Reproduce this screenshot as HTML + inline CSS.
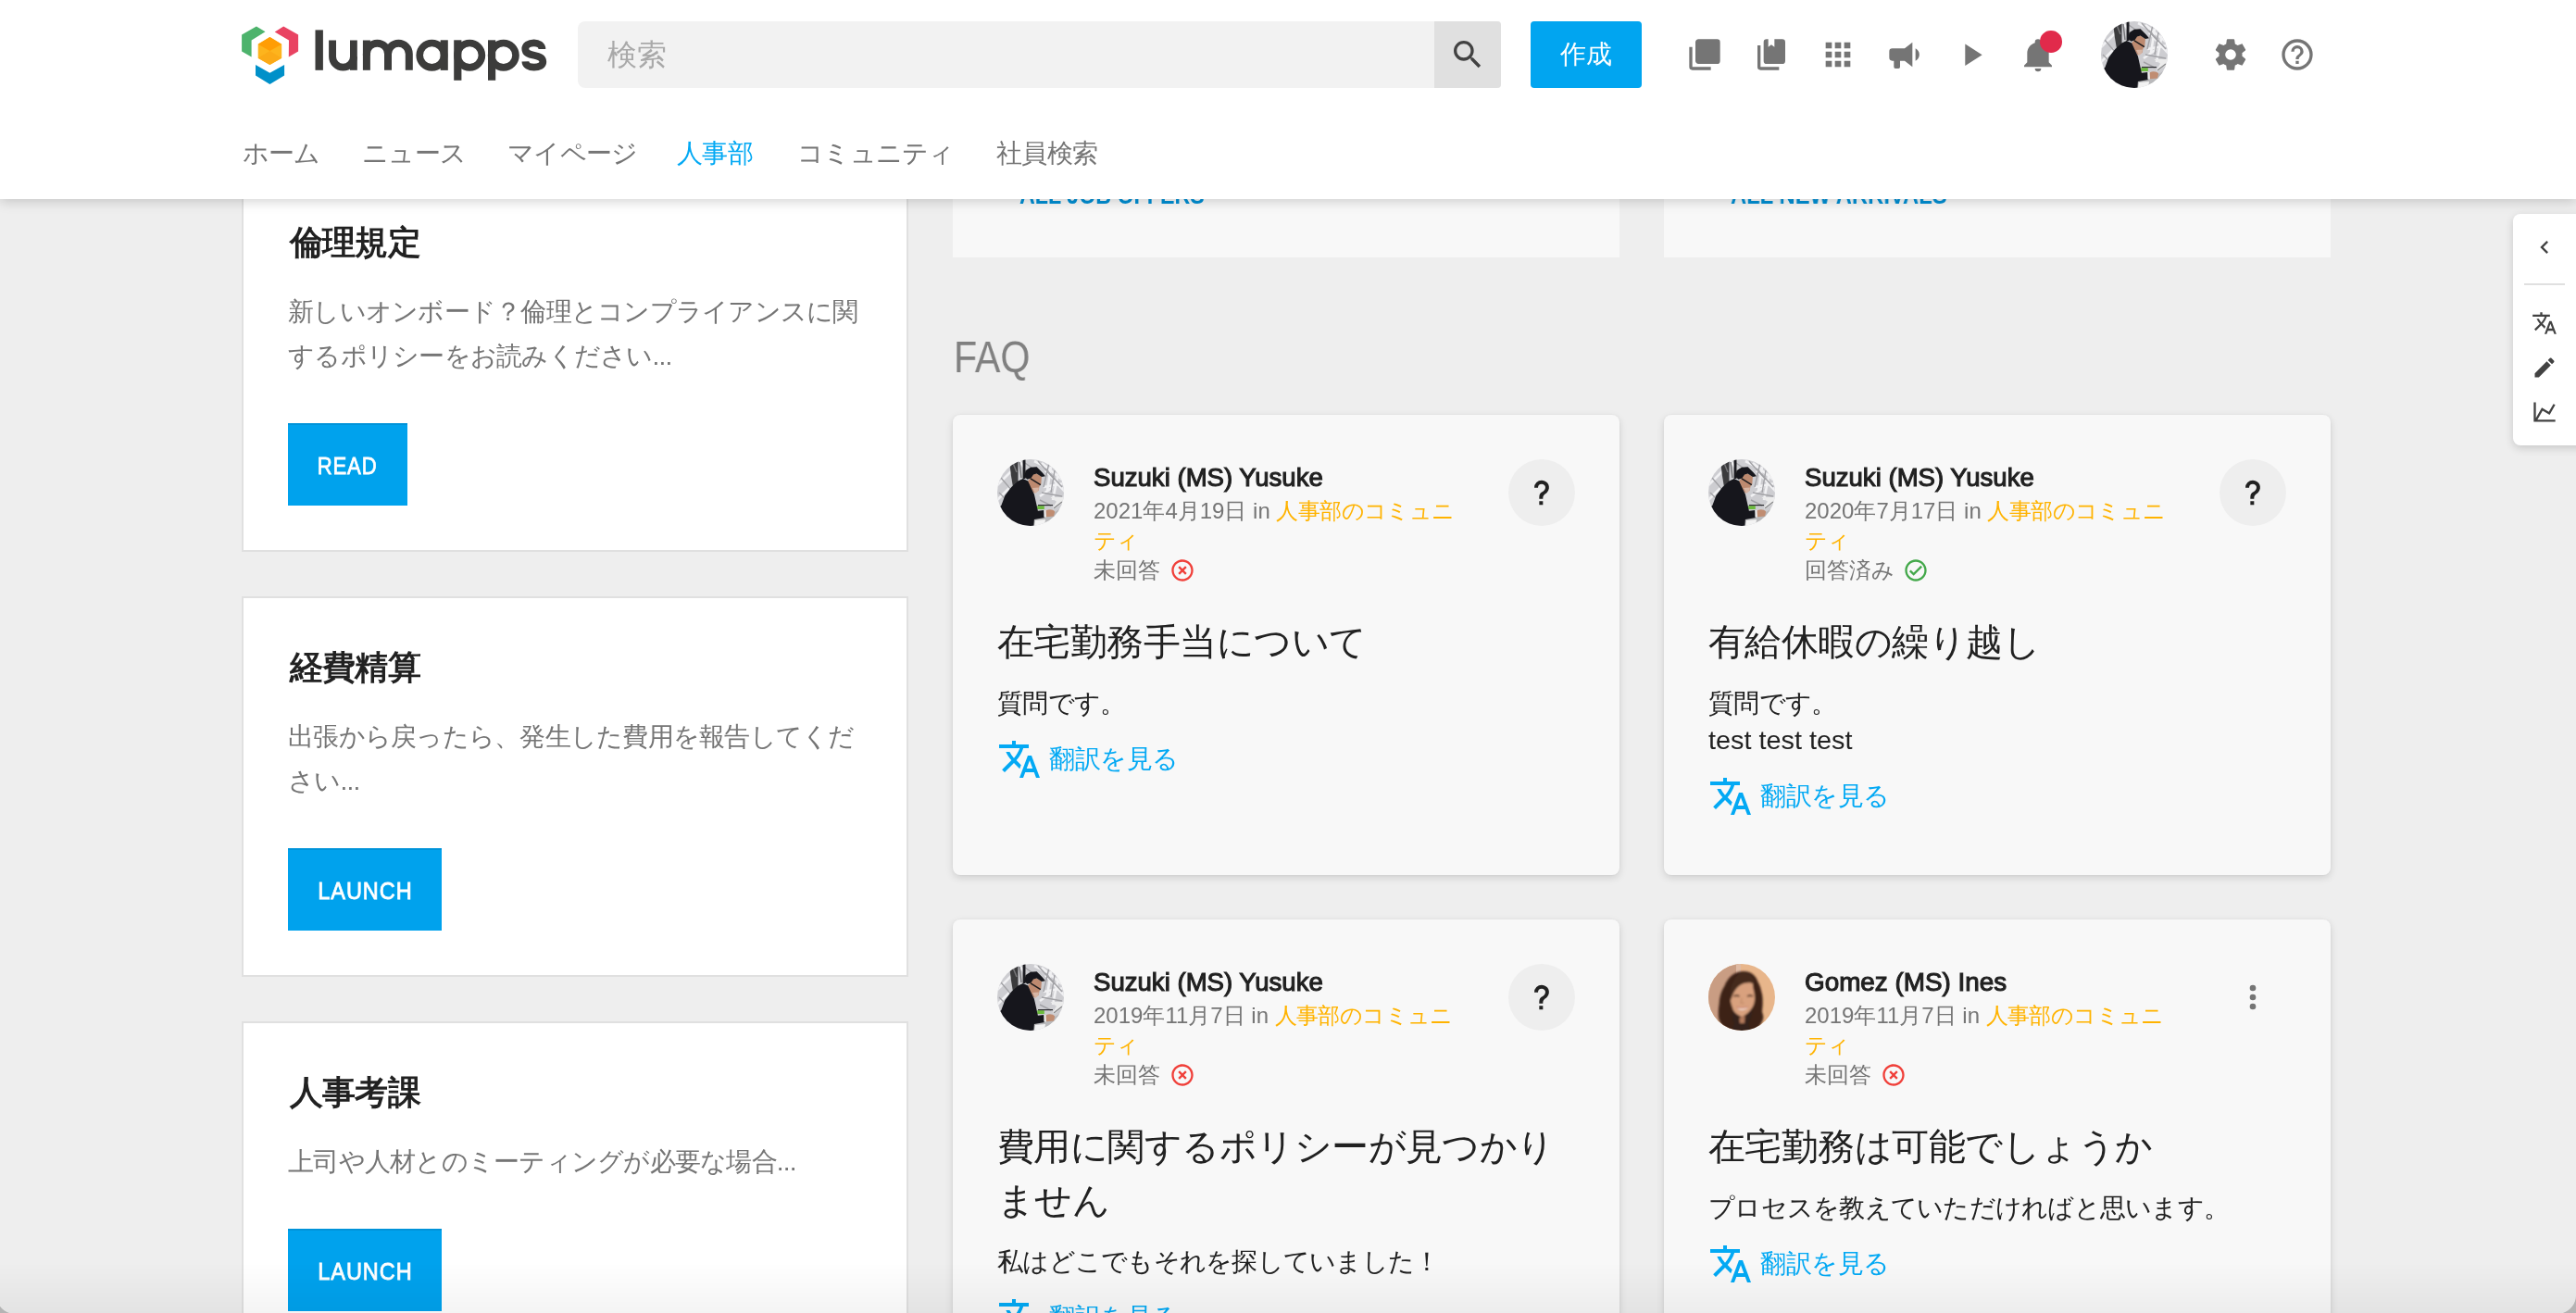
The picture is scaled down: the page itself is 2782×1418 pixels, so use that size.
<!DOCTYPE html>
<html lang="ja">
<head>
<meta charset="utf-8">
<title>LumApps - 人事部</title>
<style>
*{box-sizing:border-box;margin:0;padding:0}
html,body{width:2782px;height:1418px;overflow:hidden;background:#eeeeee}
body{font-family:"Liberation Sans",sans-serif;color:#212121;position:relative}
.abs{position:absolute}
svg{display:block}
#content,#header,#tb{will-change:transform}
.sx{display:inline-block;white-space:nowrap;letter-spacing:0}

/* ---------- header ---------- */
#header{position:absolute;left:0;top:0;width:2782px;height:215px;background:#fff;z-index:20;box-shadow:0 3px 12px rgba(0,0,0,.17)}
#logo{position:absolute;left:255px;top:20px;width:345px;height:80px}
#search{position:absolute;left:624px;top:23px;width:997px;height:72px;background:#f2f2f2;border-radius:8px 4px 4px 8px}
#search .ph{position:absolute;left:32px;top:0;line-height:72px;font-size:32px;color:#a9a9a9;white-space:nowrap}
#search .btn{position:absolute;right:0;top:0;width:72px;height:72px;background:#e0e0e0;border-radius:0 4px 4px 0}
#search .btn svg{position:absolute;left:16px;top:16px}
#create{position:absolute;left:1653px;top:23px;width:120px;height:72px;background:#01a5f0;border-radius:4px;color:#fff;font-size:28px;line-height:72px;text-align:center;white-space:nowrap}
.hic{position:absolute;top:39px;width:40px;height:40px}
#badge{position:absolute;left:2203.2px;top:33px;width:23.6px;height:23.6px;border-radius:50%;background:#e12a4b}
#uava{position:absolute;left:2269px;top:23px;width:72px;height:72px}
.nav{position:absolute;top:146px;height:40px;line-height:40px;font-size:28px;color:#757575;white-space:nowrap;letter-spacing:-.75px}
.nav.on{color:#03a9f4}

/* ---------- left cards ---------- */
.lc{position:absolute;left:261px;width:720px;height:411px;background:#fff;border:2px solid #e0e0e0}
.lc h3{position:absolute;left:50px;top:48px;font-size:36px;line-height:54px;font-weight:bold;color:#212121;white-space:nowrap;letter-spacing:-.8px}
.lc p{position:absolute;left:48px;top:126px;font-size:28px;line-height:48px;color:#757575;white-space:nowrap;letter-spacing:-.75px}
.lc .b{position:absolute;left:48px;height:89px;background:#00a2ed;color:#fff;font-size:26px;font-weight:normal;-webkit-text-stroke:.8px #fff;line-height:89px;text-align:center;border-top:2px solid #0093d9}
.lc .b .sx{transform-origin:50% 50%}

/* ---------- right column ---------- */
.tc{position:absolute;top:150px;width:720px;height:128px;background:#f8f8f8}
.tc span{position:absolute;left:72px;top:46px;font-size:28px;line-height:30px;font-weight:bold;color:#0290d5;white-space:nowrap;transform-origin:0 50%}
#faq{position:absolute;left:1029.5px;top:354.5px;font-size:49px;line-height:60px;color:#808080;white-space:nowrap;transform-origin:0 50%}
.fc{position:absolute;width:720px;background:#f8f8f8;border-radius:8px;box-shadow:0 3px 8px rgba(0,0,0,.13),0 0 3px rgba(0,0,0,.06)}
.fc .av{position:absolute;left:48px;top:48px;width:72px;height:72px}
.fc .nm{position:absolute;left:152px;top:48px;font-size:28px;line-height:40px;font-weight:normal;-webkit-text-stroke:1.1px #212121;color:#212121;white-space:nowrap}
.fc .nm .sx{transform-origin:0 50%}
.fc .mt{position:absolute;left:152px;top:88px;font-size:24px;line-height:32px;color:#757575;white-space:nowrap}
.fc .mt b{font-weight:normal;color:#ffb300;letter-spacing:-.6px}
.fc .mt svg{position:absolute}
.fc .hb{position:absolute;left:600px;top:48px;width:72px;height:72px;border-radius:50%;background:#eeeeee}
.fc .hb svg{position:absolute;left:20px;top:20px}
.fc .dv{position:absolute;left:616px;top:64px}
.fc h4{position:absolute;left:48px;top:216px;font-size:40px;line-height:58px;font-weight:normal;color:#212121;white-space:nowrap;letter-spacing:-.55px}
.fc .bd{position:absolute;left:48px;font-size:28px;line-height:40px;color:#212121;white-space:nowrap;letter-spacing:-.75px}
.fc .tr{position:absolute;left:48px;height:48px;line-height:48px;font-size:28px;color:#03a9f4;white-space:nowrap;padding-left:56px;letter-spacing:-.4px}
.fc .tr svg{position:absolute;left:0;top:0;fill:#03a9f4}

/* ---------- right toolbar ---------- */
#tb{position:absolute;left:2714px;top:231px;width:80px;height:250px;background:#fff;border-radius:8px 0 0 8px;box-shadow:0 3px 10px rgba(0,0,0,.16)}
#tb svg{position:absolute;left:20px}
#tb i{position:absolute;left:12px;top:75px;width:44px;height:2px;background:#e0e0e0}

#botfade{position:absolute;left:0;top:1364px;width:2782px;height:54px;background:linear-gradient(to bottom,rgba(0,0,0,0),rgba(0,0,0,.045));z-index:30}
.corner{position:absolute;top:1398px;width:20px;height:20px;z-index:31}
</style>
</head>
<body>
<svg width="0" height="0" style="position:absolute">
  <defs>
    <path id="itr" d="M12.87,15.07L10.33,12.56L10.36,12.53C12.1,10.59 13.34,8.36 14.07,6H17V4H10V2H8V4H1V6H12.17C11.5,7.92 10.44,9.75 9,11.35C8.07,10.32 7.3,9.19 6.69,8H4.69C5.42,9.63 6.42,11.17 7.67,12.56L2.58,17.58L4,19L9,14L12.11,17.11L12.87,15.07M18.5,10H16.5L12,22H14L15.12,19H19.87L21,22H23L18.5,10M15.88,17L17.5,12.67L19.12,17H15.88Z"/>
    <path id="ixc" fill="#f0403a" d="M12,20C7.59,20 4,16.41 4,12C4,7.59 7.59,4 12,4C16.41,4 20,7.59 20,12C20,16.41 16.41,20 12,20M12,2C6.47,2 2,6.47 2,12C2,17.53 6.47,22 12,22C17.53,22 22,17.53 22,12C22,6.47 17.53,2 12,2M14.59,8L12,10.59L9.41,8L8,9.41L10.59,12L8,14.59L9.41,16L12,13.41L14.59,16L16,14.59L13.41,12L16,9.41L14.59,8Z"/>
    <path id="ick" fill="#43a84a" d="M12 2C6.5 2 2 6.5 2 12S6.5 22 12 22 22 17.5 22 12 17.5 2 12 2M12 20C7.59 20 4 16.41 4 12S7.59 4 12 4 20 7.59 20 12 16.41 20 12 20M16.59 7.58L10 14.17L7.41 11.59L6 13L10 17L18 9L16.59 7.58Z"/>
    <path id="iq" fill="#212121" d="M10,19H13V22H10V19M12,2C17.35,2.22 19.68,7.62 16.5,11.67C15.67,12.67 14.33,13.33 13.67,14.17C13,15 13,16 13,17H10C10,15.33 10,13.92 10.67,12.92C11.33,11.92 12.67,11.33 13.5,10.67C15.92,8.43 15.32,5.26 12,5A3,3 0 0,0 9,8H6A6,6 0 0,1 12,2Z"/>
    <clipPath id="cc"><circle cx="36" cy="36" r="36"/></clipPath>
    <filter id="bl" x="-10%" y="-10%" width="120%" height="120%"><feGaussianBlur stdDeviation="0.7"/></filter>
    <filter id="bl2" x="-10%" y="-10%" width="120%" height="120%"><feGaussianBlur stdDeviation="1.3"/></filter>
    <g id="man" clip-path="url(#cc)">
      <rect width="72" height="72" fill="#cdcdd1"/>
      <g filter="url(#bl)">
        <path d="M-2 30L20 8M0 44L14 30M48 4L70 22M52 12L74 36M50 30L72 26M46 40L60 30M58 8L54 34M66 14L60 44M40 2L56 10M24 2L30 10" stroke="#f1f1f3" stroke-width="2.6" fill="none"/>
        <path d="M30 4L50 18M44 2L62 22M52 10L70 30M4 20L16 34M56 4L50 30M62 12L58 36M48 36L70 40M2 36L12 46M46 44L58 50" stroke="#a2a2a6" stroke-width="1.4" fill="none"/>
        <path d="M13.5 6L16 3L22.5 2L22.5 27L17 30L15 18Z" fill="#3b3b3d"/>
        <rect x="27.6" y="-1" width="2.9" height="22" fill="#1e1e20"/>
        <path d="M17 4L21 14M24 3L26 20" stroke="#77777a" stroke-width="1.5"/>
        <path d="M40 64L52 62L64 56L70 52L72 72H38Z" fill="#b9b9bb"/>
        <path d="M41 66L52 65L51 72H40Z" fill="#f3f3f3"/>
        <polygon points="57.3,41 72,41 70,47.5 61.3,53.9 59.8,52.4 64,45.7" fill="#ececec"/>
        <path d="M61 53L70 46" stroke="#8a8a8c" stroke-width="1.4"/>
        <rect x="43.2" y="50.2" width="7.6" height="3.8" fill="#6cbc3e"/>
        <path d="M44 49.6H60" stroke="#2b2b2d" stroke-width="1.2"/>
        <polygon points="35.9,20.2 38.5,16.2 42.6,15.5 47.9,18.9 47.3,26.9 45.4,29.6 44.8,33.8 39.9,36.6 36.6,32.3 33,23.6" fill="#bd8a70"/>
        <path d="M38 31L41 37L44.6 34L44.9 30.5Z" fill="#d6b5a4"/>
        <polygon points="30.5,12.2 35.9,8.8 42.6,8.2 48.6,14.2 52,18.3 47.9,19 42.6,15.5 39,16.4 36.4,20.6 32.5,21.8 29.3,18.9" fill="#15161a"/>
        <path d="M36 20.9L46.8 27.7" stroke="#1b1b1d" stroke-width="1.5"/>
        <path d="M22.5,23.6L27.8,20.9L33.2,23.6L37.2,32.3L39.9,37.7L42.6,49.7L43.9,55.8L50.6,55.1L51.3,63.1L39.9,65.1L39.2,74L-2,74L-2,56L4.4,49.7L8.4,39L15.1,30.3Z" fill="#14161b"/>
        <rect x="50.4" y="55" width="2.4" height="7.6" fill="#eeeeee"/>
        <path d="M52.6 55.2C56 53.6 60 54 62.2 56.4L61 61.4L53 62.2Z" fill="#c08d72"/>
      </g>
    </g>
    <g id="woman" clip-path="url(#cc)">
      <rect width="72" height="72" fill="#e8b68b"/>
      <rect width="32.5" height="72" fill="#c99d83"/>
      <rect x="30" y="0" width="5" height="12" fill="#e0bba4"/>
      <g filter="url(#bl2)">
        <path d="M36.9 8.1C41 7.6 45 9 47.8 10.9C50.5 13 52.5 16 53.5 19.5C55.5 23 56.7 26.5 57.2 29.7C58.3 33 58.7 36.5 58.6 39.8C58.8 44 58.4 48 57.9 51.4C58.8 54 59.5 56.5 59.3 58.6C58.5 62 57 65 55 67.3L50 74H24L13.7 65.1C11.5 61 10.6 57.5 10.9 54.3C10.8 50.5 11 47 11.6 44.1C11.7 40.5 12.2 37 13 34C14 30 15.5 27 17.4 23.9C19 19.5 21.5 16 24.6 13C28 10 32 8.4 36.9 8.1Z" fill="#3c2319"/>
        <path d="M28.9 23.2C33 19.5 42 18.5 47.8 21L48.5 26.8C49.8 31 50.3 35.5 49.9 39.8C49 46 46 52 36.2 57.4C29 54 26.5 50.5 26 47C24.2 43 23.6 39 23.9 35.5C24.5 30.5 26.2 26.5 28.9 23.2Z" fill="#d9a17e"/>
        <path d="M36.9 8.4C44 9 49 14 50.5 22C46 19.5 40 19.8 35 22.5C30 25.5 26.5 31 24.5 39C22.5 33 24 24 28 17C30.5 12.5 33.5 9.5 36.9 8.4Z" fill="#452a1e"/>
        <path d="M27.5 34.9C29.5 33.9 31.5 33.9 33.5 34.9M42 34.9C44 33.9 46 33.9 48 34.9" stroke="#4e2e21" stroke-width="1.7" fill="none"/>
        <path d="M36 37L35.2 42.3L38.6 42.3" stroke="#c18a69" stroke-width="1.2" fill="none"/>
        <path d="M30.4 47C33 48.6 40 48.6 42.8 46.6C41.5 50.6 33 51.2 30.4 47Z" fill="#f2d9cf"/>
        <path d="M30.2 46.6C34 47.6 39 47.4 43 46.2" stroke="#c97f6e" stroke-width="1.1" fill="none"/>
        <path d="M26.5 50C29 55 32.5 57.5 36.2 58.5C41 56.5 45 52.5 47.5 47C48 54 46 60 43 64L46 74H25L27.5 64C25.5 60 25.5 55 26.5 50Z" fill="#34201a"/>
        <path d="M33.5 58.2L36.2 57.4L39.6 56L39 64L33.8 64Z" fill="#b47a5c"/>
      </g>
    </g>
  </defs>
</svg>

<!-- ======= page content ======= -->
<div id="content">
<div class="lc" style="top:185px">
  <h3>倫理規定</h3>
  <p>新しいオンボード？倫理とコンプライアンスに関<br>するポリシーをお読みください...</p>
  <div class="b" style="top:270px;width:129px"><span class="sx" style="letter-spacing:1px;transform:scaleX(.85)">READ</span></div>
</div>
<div class="lc" style="top:644px">
  <h3>経費精算</h3>
  <p>出張から戻ったら、発生した費用を報告してくだ<br>さい...</p>
  <div class="b" style="top:270px;width:166px"><span class="sx" style="letter-spacing:1px;transform:scaleX(.905)">LAUNCH</span></div>
</div>
<div class="lc" style="top:1103px">
  <h3>人事考課</h3>
  <p>上司や人材とのミーティングが必要な場合...</p>
  <div class="b" style="top:222px;width:166px"><span class="sx" style="letter-spacing:1px;transform:scaleX(.905)">LAUNCH</span></div>
</div>

<div class="tc" style="left:1029px"><span style="transform:scaleX(.83)">ALL JOB OFFERS</span></div>
<div class="tc" style="left:1797px"><span style="transform:scaleX(.85)">ALL NEW ARRIVALS</span></div>
<div id="faq" style="transform:scaleX(.84)">FAQ</div>

<div class="fc" style="left:1029px;top:448px;height:497px">
  <svg class="av" viewBox="0 0 72 72"><use href="#man"/></svg>
  <div class="nm"><span class="sx" style="transform:scaleX(.985)">Suzuki (MS) Yusuke</span></div>
  <div class="mt">2021年4月19日 in <b>人事部のコミュニ<br>ティ</b><br>未回答<svg style="left:82px;top:66px" width="28" height="28" viewBox="0 0 24 24"><use href="#ixc"/></svg></div>
  <div class="hb"><svg width="32" height="32" viewBox="0 0 24 24"><use href="#iq"/></svg></div>
  <h4>在宅勤務手当について</h4>
  <div class="bd" style="top:292px">質問です。</div>
  <div class="tr" style="top:348px"><svg width="48" height="48" viewBox="0 0 24 24"><use href="#itr"/></svg>翻訳を見る</div>
</div>

<div class="fc" style="left:1797px;top:448px;height:497px">
  <svg class="av" viewBox="0 0 72 72"><use href="#man"/></svg>
  <div class="nm"><span class="sx" style="transform:scaleX(.985)">Suzuki (MS) Yusuke</span></div>
  <div class="mt">2020年7月17日 in <b>人事部のコミュニ<br>ティ</b><br>回答済み<svg style="left:106px;top:66px" width="28" height="28" viewBox="0 0 24 24"><use href="#ick"/></svg></div>
  <div class="hb"><svg width="32" height="32" viewBox="0 0 24 24"><use href="#iq"/></svg></div>
  <h4>有給休暇の繰り越し</h4>
  <div class="bd" style="top:292px">質問です。<br><span class="sx" style="transform:scaleX(1.03);transform-origin:0 50%">test test test</span></div>
  <div class="tr" style="top:388px"><svg width="48" height="48" viewBox="0 0 24 24"><use href="#itr"/></svg>翻訳を見る</div>
</div>

<div class="fc" style="left:1029px;top:993px;height:560px">
  <svg class="av" viewBox="0 0 72 72"><use href="#man"/></svg>
  <div class="nm"><span class="sx" style="transform:scaleX(.985)">Suzuki (MS) Yusuke</span></div>
  <div class="mt">2019年11月7日 in <b>人事部のコミュニ<br>ティ</b><br>未回答<svg style="left:82px;top:66px" width="28" height="28" viewBox="0 0 24 24"><use href="#ixc"/></svg></div>
  <div class="hb"><svg width="32" height="32" viewBox="0 0 24 24"><use href="#iq"/></svg></div>
  <h4>費用に関するポリシーが見つかり<br>ません</h4>
  <div class="bd" style="top:350px">私はどこでもそれを探していました！</div>
  <div class="tr" style="top:406px"><svg width="48" height="48" viewBox="0 0 24 24"><use href="#itr"/></svg>翻訳を見る</div>
</div>

<div class="fc" style="left:1797px;top:993px;height:560px">
  <svg class="av" viewBox="0 0 72 72"><use href="#woman"/></svg>
  <div class="nm"><span class="sx" style="transform:scaleX(.995)">Gomez (MS) Ines</span></div>
  <div class="mt">2019年11月7日 in <b>人事部のコミュニ<br>ティ</b><br>未回答<svg style="left:82px;top:66px" width="28" height="28" viewBox="0 0 24 24"><use href="#ixc"/></svg></div>
  <svg class="dv" width="40" height="40" viewBox="0 0 24 24"><path fill="#757575" d="M12,16A2,2 0 0,1 14,18A2,2 0 0,1 12,20A2,2 0 0,1 10,18A2,2 0 0,1 12,16M12,10A2,2 0 0,1 14,12A2,2 0 0,1 12,14A2,2 0 0,1 10,12A2,2 0 0,1 12,10M12,4A2,2 0 0,1 14,6A2,2 0 0,1 12,8A2,2 0 0,1 10,6A2,2 0 0,1 12,4Z"/></svg>
  <h4>在宅勤務は可能でしょうか</h4>
  <div class="bd" style="top:292px">プロセスを教えていただければと思います。</div>
  <div class="tr" style="top:348px"><svg width="48" height="48" viewBox="0 0 24 24"><use href="#itr"/></svg>翻訳を見る</div>
</div>

</div>

<!-- ======= header ======= -->
<div id="header">
<svg id="logo" viewBox="255 20 345 80">
  <polygon fill="#4db36c" points="276.9,28.4 286.5,34.3 271.6,43.4 271.6,61.5 261.1,55.4 261.1,37.4"/>
  <polygon fill="#e94362" points="306.2,28.4 322.1,37.6 322.1,55.4 311.8,61.5 312,43.4 296.7,34.4"/>
  <polygon fill="#0090c9" points="276,70 291.4,78.8 307.1,70 307.1,81.6 291.4,91.1 276,81.6"/>
  <polygon fill="#fdb41d" points="291.4,40.1 304.2,47.7 304.2,62.7 291.4,70.1 278.7,62.7 278.7,47.7"/>
  <polygon fill="#ff9d05" points="291.4,40.1 304.2,47.7 291.4,55.1 278.7,47.7"/>
  <polygon fill="#fbaa17" points="291.4,55.1 304.2,62.7 291.4,70.1 278.7,62.7"/>
  <g fill="#3c3c3b">
    <rect x="340.5" y="32.4" width="8.4" height="43.4"/>
    <rect x="378" y="43.5" width="7.8" height="32.3"/>
    <rect x="391.9" y="43.5" width="8" height="32.3"/>
    <rect x="475.7" y="43.3" width="8.1" height="32.6"/>
    <rect x="490.2" y="43.3" width="8.2" height="43.5"/>
    <rect x="527" y="43.3" width="8.2" height="43.5"/>
  </g>
  <g fill="none" stroke="#3c3c3b">
    <path stroke-width="7.9" d="M359.05 43.5V61.2A11.45 11.45 0 0 0 381.95 61.2"/>
    <path stroke-width="8" d="M395.9 60V58.2A11.55 11.55 0 0 1 419 58.2V75.8M419 58.2A11.4 11.4 0 0 1 441.8 58.2V75.8"/>
    <circle stroke-width="7.6" cx="466.4" cy="59.65" r="13.2"/>
    <circle stroke-width="7.6" cx="507.2" cy="59.65" r="13.2"/>
    <circle stroke-width="7.6" cx="543.8" cy="59.65" r="13.2"/>
    <path stroke-width="7.8" d="M585.4 53C585.4 49 581.5 46.3 576.7 46.3C571 46.3 567.3 49 567.3 52.8C567.3 57.5 571.5 58.7 576.8 59.8C582.5 61 586.3 62.3 586.3 66.8C586.3 70.5 582.3 72.7 576.7 72.7C571.5 72.7 567.5 70.3 567.4 66.4"/>
  </g>
</svg>

<div id="search">
  <div class="ph">検索</div>
  <div class="btn"><svg width="40" height="40" viewBox="0 0 24 24"><path fill="#424242" d="M9.5,3A6.5,6.5 0 0,1 16,9.5C16,11.11 15.41,12.59 14.44,13.73L14.71,14H15.5L20.5,19L19,20.5L14,15.5V14.71L13.73,14.44C12.59,15.41 11.11,16 9.5,16A6.5,6.5 0 0,1 3,9.5A6.5,6.5 0 0,1 9.5,3M9.5,5C7,5 5,7 5,9.5C5,12 7,14 9.5,14C12,14 14,12 14,9.5C14,7 12,5 9.5,5Z"/></svg></div>
</div>
<div id="create">作成</div>

<svg class="hic" style="left:1821px" viewBox="0 0 24 24"><path fill="#757575" d="M22,16A2,2 0 0,1 20,18H8C6.89,18 6,17.1 6,16V4C6,2.89 6.89,2 8,2H20A2,2 0 0,1 22,4V16M16,20V22H4A2,2 0 0,1 2,20V7H4V20H16Z"/></svg>
<svg class="hic" style="left:1893px" viewBox="0 0 24 24"><path fill="#757575" d="M19,18H9A2,2 0 0,1 7,16V4A2,2 0 0,1 9,2H10V7L12,5.5L14,7V2H19A2,2 0 0,1 21,4V16A2,2 0 0,1 19,18M17,20V22H5A2,2 0 0,1 3,20V6H5V20H17Z"/></svg>
<svg class="hic" style="left:1965px" viewBox="0 0 24 24"><path fill="#757575" d="M16,20H20V16H16M16,14H20V10H16M10,8H14V4H10M16,8H20V4H16M10,14H14V10H10M4,14H8V10H4M4,20H8V16H4M10,20H14V16H10M4,8H8V4H4V8Z"/></svg>
<svg class="hic" style="left:2037px" viewBox="0 0 24 24"><path fill="#757575" d="M12,8H4A2,2 0 0,0 2,10V14A2,2 0 0,0 4,16H5V20A1,1 0 0,0 6,21H8A1,1 0 0,0 9,20V16H12L17,20V4L12,8M21.5,12C21.5,13.71 20.54,15.26 19,16V8C20.53,8.75 21.5,10.3 21.5,12Z"/></svg>
<svg class="hic" style="left:2109px" viewBox="0 0 24 24"><path fill="#757575" d="M8,5.14V19.14L19,12.14L8,5.14Z"/></svg>
<svg class="hic" style="left:2181px" viewBox="0 0 24 24"><path fill="#757575" d="M21,19V20H3V19L5,17V11C5,7.9 7.03,5.17 10,4.29C10,4.19 10,4.1 10,4A2,2 0 0,1 12,2A2,2 0 0,1 14,4C14,4.1 14,4.19 14,4.29C16.97,5.17 19,7.9 19,11V17L21,19M14,21A2,2 0 0,1 12,23A2,2 0 0,1 10,21"/></svg>
<div id="badge"></div>
<svg id="uava" viewBox="0 0 72 72"><use href="#man"/></svg>
<svg class="hic" style="left:2389px" viewBox="0 0 24 24"><path fill="#757575" d="M12,15.5A3.5,3.5 0 0,1 8.5,12A3.5,3.5 0 0,1 12,8.5A3.5,3.5 0 0,1 15.5,12A3.5,3.5 0 0,1 12,15.5M19.43,12.97C19.47,12.65 19.5,12.33 19.5,12C19.5,11.67 19.47,11.34 19.43,11L21.54,9.37C21.73,9.22 21.78,8.95 21.66,8.73L19.66,5.27C19.54,5.05 19.27,4.96 19.05,5.05L16.56,6.05C16.04,5.66 15.5,5.32 14.87,5.07L14.5,2.42C14.46,2.18 14.25,2 14,2H10C9.75,2 9.54,2.18 9.5,2.42L9.13,5.07C8.5,5.32 7.96,5.66 7.44,6.05L4.95,5.05C4.73,4.96 4.46,5.05 4.34,5.27L2.34,8.73C2.21,8.95 2.27,9.22 2.46,9.37L4.57,11C4.53,11.34 4.5,11.67 4.5,12C4.5,12.33 4.53,12.65 4.57,12.97L2.46,14.63C2.27,14.78 2.21,15.05 2.34,15.27L4.34,18.73C4.46,18.95 4.73,19.03 4.95,18.95L7.44,17.94C7.96,18.34 8.5,18.68 9.13,18.93L9.5,21.58C9.54,21.82 9.75,22 10,22H14C14.25,22 14.46,21.82 14.5,21.58L14.87,18.93C15.5,18.67 16.04,18.34 16.56,17.94L19.05,18.95C19.27,19.03 19.54,18.95 19.66,18.73L21.66,15.27C21.78,15.05 21.73,14.78 21.54,14.63L19.43,12.97Z"/></svg>
<svg class="hic" style="left:2461px" viewBox="0 0 24 24"><path fill="#757575" d="M11,18H13V16H11V18M12,2A10,10 0 0,0 2,12A10,10 0 0,0 12,22A10,10 0 0,0 22,12A10,10 0 0,0 12,2M12,20C7.59,20 4,16.41 4,12C4,7.59 7.59,4 12,4C16.41,4 20,7.59 20,12C20,16.41 16.41,20 12,20M12,6A4,4 0 0,0 8,10H10A2,2 0 0,1 12,8A2,2 0 0,1 14,10C14,12 11,11.75 11,15H13C13,12.75 16,12.5 16,10A4,4 0 0,0 12,6Z"/></svg>

<div class="nav" style="left:261.5px">ホーム</div>
<div class="nav" style="left:391px">ニュース</div>
<div class="nav" style="left:548px">マイページ</div>
<div class="nav on" style="left:731px">人事部</div>
<div class="nav" style="left:861px">コミュニティ</div>
<div class="nav" style="left:1076px">社員検索</div>

</div>

<div id="tb">
  <svg style="top:22px" width="28" height="28" viewBox="0 0 24 24"><path fill="#424242" d="M15.41,16.58L10.83,12L15.41,7.41L14,6L8,12L14,18L15.41,16.58Z"/></svg>
  <i></i>
  <svg style="top:104px" width="28" height="28" viewBox="0 0 24 24"><use href="#itr" fill="#424242"/></svg>
  <svg style="top:152px" width="28" height="28" viewBox="0 0 24 24"><path fill="#424242" d="M20.71,7.04C21.1,6.65 21.1,6 20.71,5.63L18.37,3.29C18,2.9 17.35,2.9 16.96,3.29L15.12,5.12L18.87,8.87M3,17.25V21H6.75L17.81,9.93L14.06,6.18L3,17.25Z"/></svg>
  <svg style="top:200px" width="28" height="28" viewBox="0 0 24 24"><path fill="#424242" d="M16,11.78L20.24,4.45L21.97,5.45L16.74,14.5L10.23,10.75L5.46,19H22V21H2V3H4V17.54L9.5,8L16,11.78Z"/></svg>
</div>


<div id="botfade"></div>
<svg style="position:absolute;left:0;top:1390px;z-index:31" width="2782" height="28"><path fill="#b4b4b4" d="M0,20.8A20,20 0 0,0 10,28L0,28ZM2767.8,28A20,20 0 0,0 2782,9L2782,28Z"/></svg>
</body>
</html>
